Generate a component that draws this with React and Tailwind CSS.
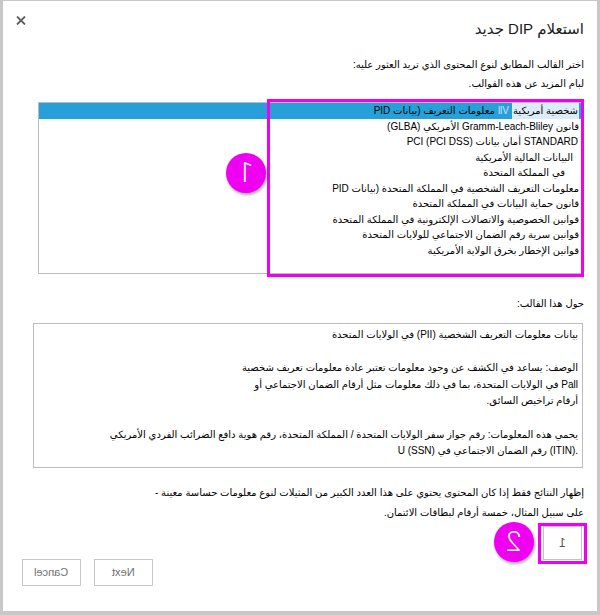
const templates = [
  { text: 'قانون Gramm-Leach-Bliley الأمريكي (GLBA)', pad: 'pr-[3px]' },
  { text: 'STANDARD أمان بيانات (PCI DSS) PCI', pad: 'pr-[4px]' },
  { text: 'البيانات المالية الأمريكية', pad: 'pr-[9px]' },
  { text: 'في المملكة المتحدة', pad: 'pr-[17px]' },
  { text: 'معلومات التعريف الشخصية في المملكة المتحدة (بيانات PID', pad: 'pr-[3px]' },
  { text: 'قانون حماية البيانات في المملكة المتحدة', pad: 'pr-[3px]' },
  { text: 'قوانين الخصوصية والاتصالات الإلكترونية في المملكة المتحدة', pad: 'pr-[3px]' },
  { text: 'قوانين سرية رقم الضمان الاجتماعي للولايات المتحدة', pad: 'pr-[3px]' },
  { text: 'قوانين الإخطار بخرق الولاية الأمريكية', pad: 'pr-[3px]' },
];

function Badge({ digit, className }) {
  return (
    <div
      className={`absolute flex h-[40px] w-[40px] items-center justify-center rounded-full bg-[#f000f0] shadow-[1px_2px_3px_rgba(0,0,0,0.35)] ${className}`}
    >
      <span className="-scale-x-100 font-['Roboto',sans-serif] text-[28px] font-light leading-none text-white">
        {digit}
      </span>
    </div>
  );
}

function FooterButton({ label }) {
  return (
    <button
      type="button"
      className="flex h-[27px] w-[59px] items-center justify-center border border-[#c8c8c8] bg-white"
    >
      <span className="-scale-x-100 text-[11px] text-[#707070]">{label}</span>
    </button>
  );
}

export default function App() {
  return (
    <div
      dir="rtl"
      className="relative h-[615px] w-[600px] border-b-[4px] border-l-[3px] border-r-[3px] border-t border-[#c8c8c8] bg-white px-[13px] font-['Liberation_Sans','DejaVu_Sans',sans-serif] text-black"
    >
      <div className="flex items-start justify-between pt-[14px]">
        <h1 className="mt-[4px] text-[15px] leading-[20px] text-[#1a1a1a]">استعلام DIP جديد</h1>
        <svg className="mt-[1px]" width="10" height="9" viewBox="0 0 10 9">
          <path d="M1 0.5 L9 8.5 M9 0.5 L1 8.5" stroke="#5f5f5f" strokeWidth="1.8" />
        </svg>
      </div>

      <div className="mt-[15.5px] text-[10px] leading-[19px]">
        <p>اختر القالب المطابق لنوع المحتوى الذي تريد العثور عليه:</p>
        <p>لبام المزيد عن هذه القوالب.</p>
      </div>

      <div className="mt-[9.5px] ml-[22px] mr-[1px] h-[172px] border border-[#bcbcbc] text-[10px]">
        <div className="flex h-[15.5px] items-center bg-[#27a0da] pr-[3px] leading-[15.5px]">
          <span className="bg-[#dcecf7] px-[1px]">شخصية أمريكية</span>
          <span className="mx-[3px] text-[#cfe6f5]">llV</span>
          <span>معلومات التعريف (بيانات PID</span>
        </div>
        {templates.map((row) => (
          <div key={row.text} className={`h-[15.5px] whitespace-nowrap leading-[15.5px] ${row.pad}`}>
            {row.text}
          </div>
        ))}
      </div>

      <p className="mt-[19.5px] text-[10px] leading-[19px]">حول هذا القالب:</p>

      <div className="mt-[10.5px] ml-[17px] mr-[1px] h-[145px] border border-[#bcbcbc] pr-[4px] pt-[2.5px] text-[10px] leading-[16.7px]">
        <p>بيانات معلومات التعريف الشخصية (PII) في الولايات المتحدة</p>
        <p>&nbsp;</p>
        <p>الوصف: يساعد في الكشف عن وجود معلومات تعتبر عادة معلومات تعريف شخصية</p>
        <p>Pall في الولايات المتحدة، بما في ذلك معلومات مثل أرقام الضمان الاجتماعي أو</p>
        <p>أرقام تراخيص السائق.</p>
        <p>&nbsp;</p>
        <p>
          يحمي هذه المعلومات: رقم جواز سفر الولايات المتحدة / المملكة المتحدة، رقم هوية دافع الضرائب الفردي الأمريكي
        </p>
        <p>
          <span dir="ltr" className="inline-block">(ITIN).</span> رقم الضمان الاجتماعي في{' '}
          <span dir="ltr" className="inline-block">U (SSN)</span>
        </p>
      </div>

      <div className="mt-[15px] text-[10px] leading-[20px]">
        <p>إظهار النتائج فقط إذا كان المحتوى يحتوي على هذا العدد الكبير من المثيلات لنوع معلومات حساسة معينة -</p>
        <p>على سبيل المثال، خمسة أرقام لبطاقات الائتمان.</p>
      </div>

      <div className="mt-[3px] flex">
        <div className="relative mr-[2px] flex h-[34px] w-[39px] items-center justify-center border border-[#c4c4c4]">
          <span className="-scale-x-100 text-[12px] text-[#555]">1</span>
          <div className="absolute -bottom-[5px] -left-[6px] -right-[6px] -top-[4px] border-[3px] border-[#f000f0]" />
        </div>
      </div>

      <div className="mt-[-1px] flex justify-end gap-[13px] pl-[6px]">
        <FooterButton label="Next" />
        <FooterButton label="Cancel" />
      </div>

      <div className="absolute left-[264px] top-[98px] h-[178px] w-[317px] border-[3px] border-[#f000f0]" />
      <Badge digit="1" className="left-[223px] top-[152px]" />
      <Badge digit="2" className="left-[491px] top-[521px]" />
    </div>
  );
}
